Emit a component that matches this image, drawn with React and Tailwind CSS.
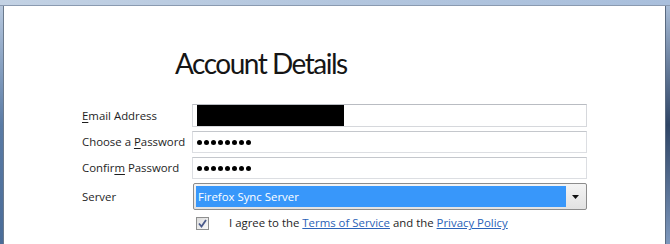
export default function App() {
  const dots = (
    <div className="flex items-center gap-[2px]">
      {[0, 1, 2, 3, 4, 5, 6, 7].map((i) => (
        <span key={i} className="block w-[5px] h-[5px] rounded-full bg-black" />
      ))}
    </div>
  );
  return (
    <div className="w-[670px] h-[244px] overflow-hidden flex flex-col bg-white" style={{ fontFamily: '"Open Sans", "Noto Sans", sans-serif' }}>
      <div className="h-[6px] shrink-0 bg-gradient-to-r from-[#c3d2e4] via-[#b3c6de] to-[#a9bfdc] border-b border-[#8a9ab0]" />
      <div className="flex flex-1 min-h-0">
        <div className="w-[3px] bg-gradient-to-b from-[#b7c8de] via-[#5a7ba5] to-[#4a6c98]" />
        <div className="w-px bg-[#6b7a8c]" />
        <div className="flex-1 bg-white flex flex-col">
          <div className="pl-[171px] pt-[38px] h-[98px] text-[28px] leading-[38px] text-[#151515] tracking-[-1.5px]" style={{ fontFamily: 'Lato, "Open Sans", sans-serif' }}>
            Account Details
          </div>
          <div className="pl-[78px] flex flex-col text-[11.4px] text-[#1e1e1e]">
            <div className="flex items-center h-[23px]">
              <div className="w-[110px]"><span className="underline underline-offset-2">E</span>mail Address</div>
              <div className="w-[395px] h-[23px] border border-[#d6d8dc] border-t-[#b9bcc2] flex items-stretch px-[4px] py-[0px]">
                <div className="w-[147px] bg-black" />
              </div>
            </div>
            <div className="flex items-center h-[22px] mt-[4px]">
              <div className="w-[110px]">Choose a <span className="underline underline-offset-2">P</span>assword</div>
              <div className="w-[395px] h-[22px] border border-[#dcdee2] border-t-[#c4c7cc] flex items-center pl-[4px]">
                {dots}
              </div>
            </div>
            <div className="flex items-center h-[22px] mt-[4px]">
              <div className="w-[110px]">Confir<span className="underline underline-offset-2">m</span> Password</div>
              <div className="w-[395px] h-[22px] border border-[#dcdee2] border-t-[#c4c7cc] flex items-center pl-[4px]">
                {dots}
              </div>
            </div>
            <div className="flex items-center h-[27px] mt-[4px]">
              <div className="w-[111px]">Server</div>
              <div className="w-[394px] h-[27px] border border-[#8c8c8c] rounded-[2px] bg-gradient-to-b from-[#f4f4f4] to-[#e2e2e2] flex items-stretch p-[2px]">
                <div className="flex-1 bg-[#3897fa] text-white flex items-center pl-[2px]">Firefox Sync Server</div>
                <div className="w-[18px] flex items-center justify-center">
                  <svg width="7" height="4" viewBox="0 0 7 4"><path d="M0 0h7L3.5 4z" fill="#111" /></svg>
                </div>
              </div>
            </div>
            <div className="flex items-center h-[14px] mt-[6px] pl-[114px]">
              <div className="w-[13px] h-[13px] border border-[#8e8f8f] bg-gradient-to-br from-[#dcdcdc] to-[#fafafa] flex items-center justify-center">
                <svg width="9" height="9" viewBox="0 0 9 9"><path d="M1 4.5l2.5 3L8 1" stroke="#4a5a8a" strokeWidth="1.8" fill="none" /></svg>
              </div>
              <div className="ml-[20px]">
                I agree to the <span className="text-[#2a62b8] underline">Terms of Service</span> and the <span className="text-[#2a62b8] underline">Privacy Policy</span>
              </div>
            </div>
          </div>
        </div>
        <div className="w-px bg-[#5a6a80]" />
        <div className="w-[4px] bg-gradient-to-b from-[#a8bcd6] via-[#2f4566] to-[#7e98bd]" />
      </div>
    </div>
  );
}
